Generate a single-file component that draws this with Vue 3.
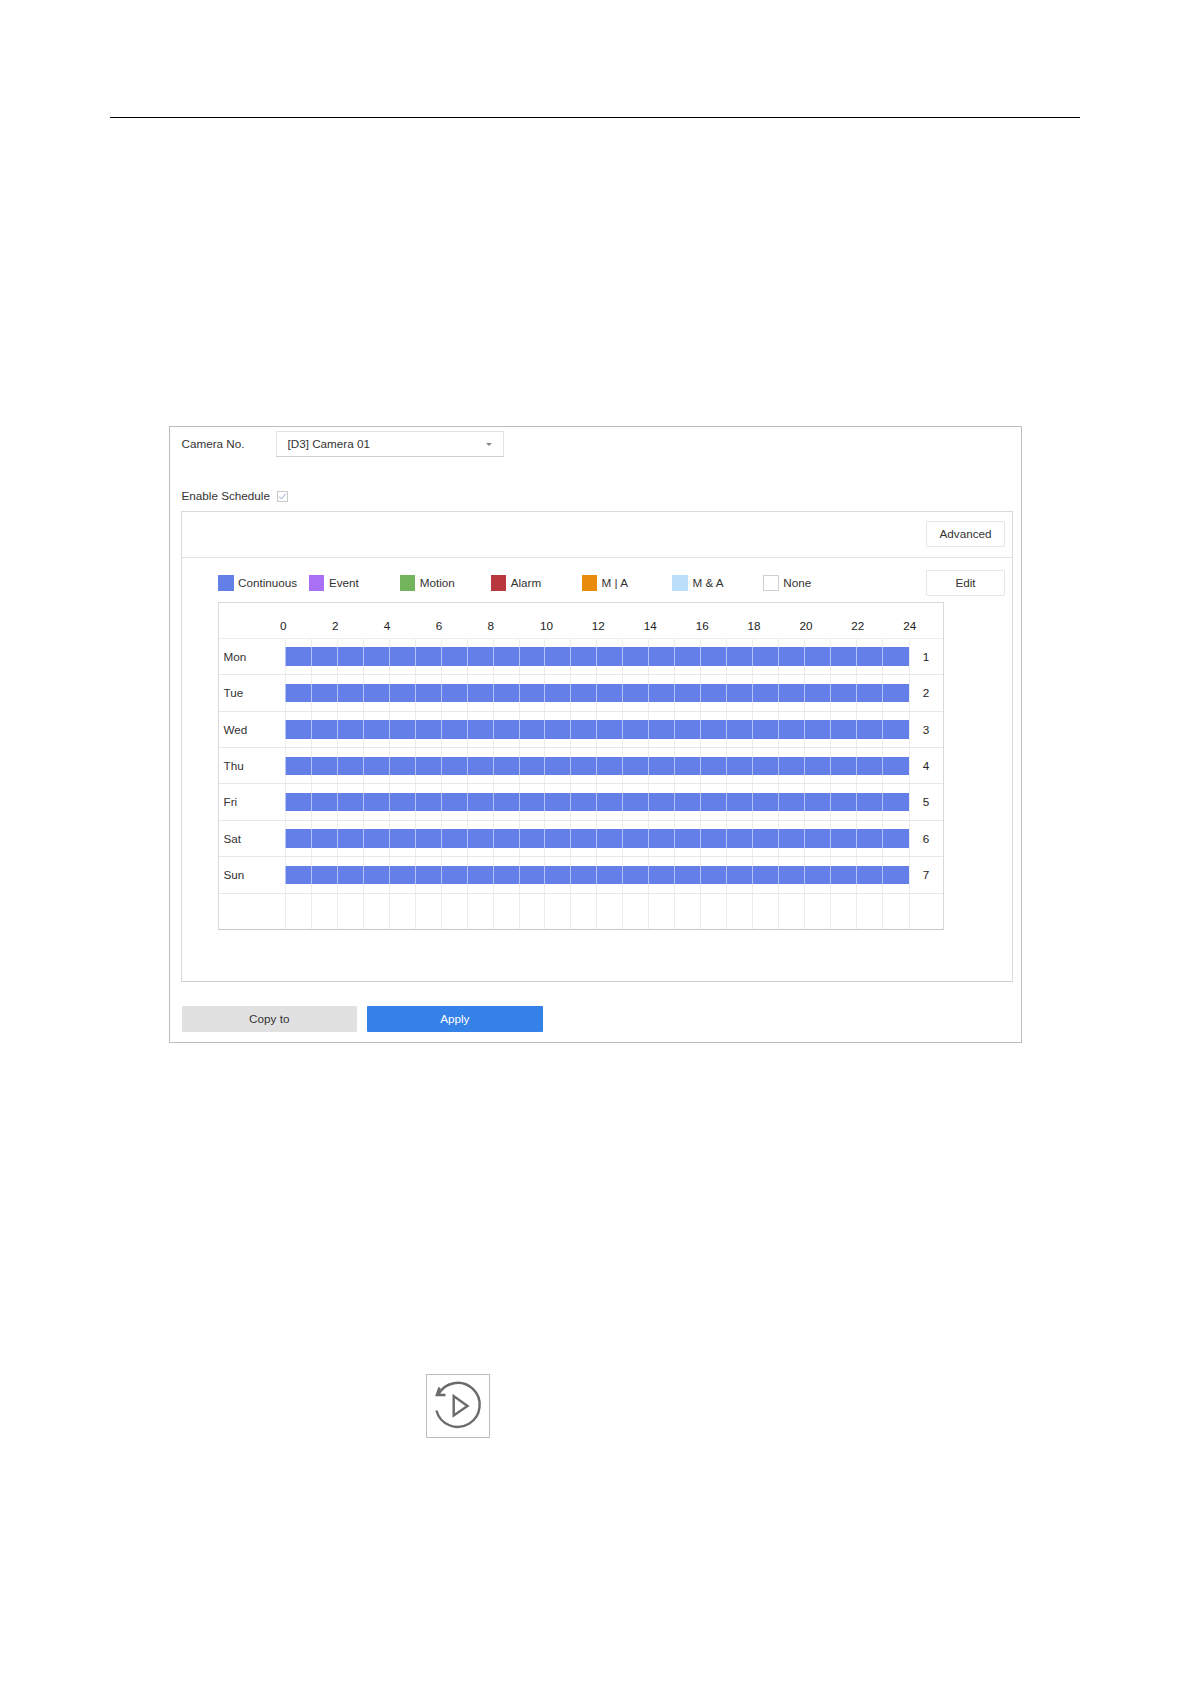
<script setup>
const legend = [
  { name: 'Continuous', color: '#6480e8' },
  { name: 'Event', color: '#a970f5' },
  { name: 'Motion', color: '#74b45c' },
  { name: 'Alarm', color: '#b8383e' },
  { name: 'M | A', color: '#e98b0c' },
  { name: 'M & A', color: '#bbdffa' },
  { name: 'None', color: '#ffffff', outlined: true }
]
const hours = [0, 2, 4, 6, 8, 10, 12, 14, 16, 18, 20, 22, 24]
const days = ['Mon', 'Tue', 'Wed', 'Thu', 'Fri', 'Sat', 'Sun']
</script>

<template>
  <div class="page">
    <div class="rule"></div>

    <section class="panel">
      <div class="camera">
        <span class="camera-label lift">Camera No.</span>
        <div class="select">
          <span class="lift">[D3] Camera 01</span>
          <span class="caret"></span>
        </div>
      </div>

      <div class="enable">
        <span class="lift">Enable Schedule</span>
        <span class="check">
          <svg width="9" height="9" viewBox="0 0 9 9" fill="none">
            <path d="M1 4.5 L3.5 7 L8 1.5" stroke="#8ea2dc" stroke-width="0.9" />
          </svg>
        </span>
      </div>

      <div class="schedule">
        <div class="toolbar">
          <button class="ghost" type="button">Advanced</button>
        </div>

        <div class="legend-row">
          <div
            v-for="item in legend"
            :key="item.name"
            class="legend-item"
          >
            <span
              class="swatch"
              :class="{ outlined: item.outlined }"
              :style="{ backgroundColor: item.color }"
            ></span>
            <span class="lift">{{ item.name }}</span>
          </div>
          <button class="ghost edit" type="button">Edit</button>
        </div>

        <div class="grid">
          <div class="hours">
            <span
              v-for="h in hours"
              :key="h"
              class="hour"
              :class="{ wide: h >= 10 }"
            >{{ h }}</span>
          </div>

          <div v-for="(day, i) in days" :key="day" class="row">
            <span class="day">{{ day }}</span>
            <div class="track">
              <div v-for="n in 24" :key="n" class="cell">
                <div class="fill"></div>
              </div>
            </div>
            <span class="num">{{ i + 1 }}</span>
          </div>

          <div class="row last">
            <span class="day"></span>
            <div class="track">
              <div v-for="n in 24" :key="n" class="cell"></div>
            </div>
            <span class="num"></span>
          </div>
        </div>
      </div>

      <div class="actions">
        <button class="action copy" type="button">Copy to</button>
        <button class="action apply" type="button">Apply</button>
      </div>
    </section>

    <div class="playback">
      <svg width="62" height="62" viewBox="0 0 62 62" fill="none" stroke="#6b6b6f" stroke-width="2.4">
        <path d="M9.4 35.5 A22 22 0 1 0 11 20" />
        <path d="M12.5 12.5 L9.8 20 L18.5 20" />
        <path d="M26.7 21 L26.7 40.5 L40.5 31 Z" />
      </svg>
    </div>
  </div>
</template>

<style>
html, body {
  background: #ffffff;
}
</style>

<style scoped>
.page {
  width: 1191px;
  height: 1684px;
  overflow: hidden;
  font-family: "Liberation Sans", Arial, sans-serif;
  font-size: 11.7px;
  color: #333333;
  background: #ffffff;
}
.lift {
  margin-bottom: 2px;
}
.rule {
  height: 1px;
  margin: 117px 110px 0;
  width: 970px;
  background: #000000;
}
.panel {
  box-sizing: border-box;
  width: 853px;
  height: 617px;
  margin: 308px 0 0 169px;
  padding: 4px 10px 0 11px;
  border: 1px solid #bdbdbd;
}
.camera {
  display: flex;
  align-items: center;
  height: 26px;
  padding-left: 0.5px;
}
.camera-label {
  width: 94.5px;
}
.select {
  box-sizing: border-box;
  width: 228px;
  height: 26px;
  padding: 0 11px 0 10.5px;
  display: flex;
  align-items: center;
  justify-content: space-between;
  border: 1px solid #e2e2e2;
  border-bottom-color: #cfcfcf;
}
.caret {
  width: 0;
  height: 0;
  border-left: 3px solid transparent;
  border-right: 3px solid transparent;
  border-top: 3px solid #8a8a8a;
}
.enable {
  display: flex;
  align-items: center;
  gap: 7.5px;
  height: 14px;
  margin-top: 32px;
  padding-left: 0.5px;
}
.check {
  box-sizing: border-box;
  width: 11px;
  height: 11px;
  border: 1px solid #c9c9c9;
  display: flex;
  align-items: center;
  justify-content: center;
}
.schedule {
  box-sizing: border-box;
  height: 471px;
  width: 832px;
  margin-top: 8px;
  border: 1px solid #dadada;
  border-bottom-color: #cfcfcf;
}
.toolbar {
  box-sizing: border-box;
  height: 46px;
  padding: 9px 7px 0 0;
  display: flex;
  justify-content: flex-end;
  border-bottom: 1px solid #e2e2e2;
}
.ghost {
  box-sizing: border-box;
  width: 79px;
  height: 26px;
  padding: 0 0 2px;
  border: 1px solid #e6e6e6;
  border-radius: 1px;
  background: #ffffff;
  font: inherit;
  color: #333333;
}
.legend-row {
  position: relative;
  display: flex;
  height: 44px;
  padding: 17px 0 0 36px;
  box-sizing: border-box;
}
.legend-item {
  width: 90.9px;
  height: 16px;
  display: flex;
  align-items: center;
  gap: 4.5px;
}
.swatch {
  box-sizing: border-box;
  width: 15.5px;
  height: 16px;
  flex: none;
}
.swatch.outlined {
  border: 1px solid #cfcfcf;
}
.edit {
  position: absolute;
  right: 7px;
  top: 12px;
}
.grid {
  box-sizing: border-box;
  width: 726px;
  height: 328px;
  margin-left: 36px;
  border: 1px solid #d9d9d9;
  border-bottom-color: #c8c8c8;
}
.hours {
  box-sizing: border-box;
  height: 36px;
  padding: 16px 0 0 61px;
  display: flex;
  color: #222222;
  border-bottom: 1px solid #ececec;
}
.hour {
  width: 51.9px;
  flex: none;
}
.hour.wide {
  text-indent: 0.5px;
}
.row {
  display: flex;
  height: 36.37px;
  box-sizing: border-box;
  border-bottom: 1px solid #e8e8e8;
}
.row.last {
  border-bottom: 0;
  height: 35.5px;
}
.day {
  width: 67px;
  flex: none;
  padding-left: 4.5px;
  box-sizing: border-box;
  line-height: 36px;
}
.track {
  width: 622.8px;
  flex: none;
  display: grid;
  grid-template-columns: repeat(24, 1fr);
  box-shadow: 1px 0 0 #ececec;
}
.cell {
  display: flex;
  align-items: center;
  box-shadow: -1px 0 0 #ececec;
}
.fill {
  width: 100%;
  height: 18.5px;
  background: #6480e8;
  box-shadow: -1px 0 0 #b4c3f5;
}
.num {
  flex: 1;
  text-align: center;
  line-height: 36px;
  color: #222222;
}
.actions {
  display: flex;
  gap: 10px;
  margin-top: 24px;
  padding-left: 0.5px;
}
.action {
  width: 175.5px;
  height: 26px;
  padding: 0 0 2px;
  border: 0;
  border-radius: 1px;
  font: inherit;
}
.copy {
  background: #e1e1e1;
  color: #333333;
}
.apply {
  background: #3481e8;
  color: #ffffff;
}
.playback {
  box-sizing: border-box;
  width: 64px;
  height: 64px;
  margin: 331px 0 0 426px;
  border: 1px solid #bdbdbd;
}
</style>
